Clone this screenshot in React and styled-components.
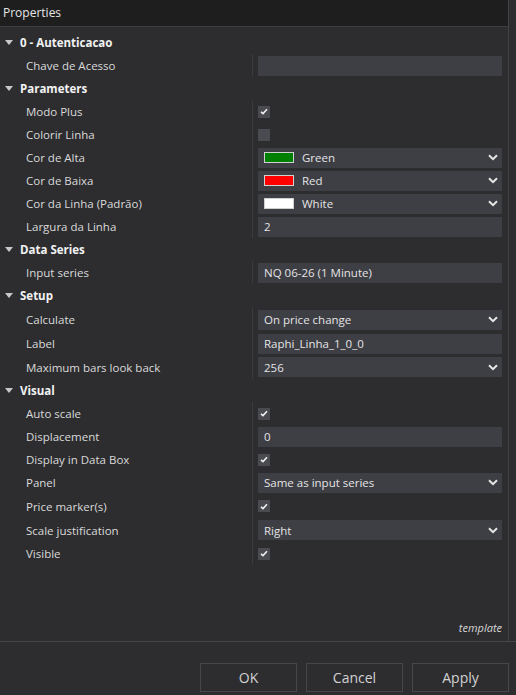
import React from "react";
import styled, { createGlobalStyle } from "styled-components";

const GlobalStyle = createGlobalStyle`
  html, body {
    margin: 0;
    padding: 0;
    background: #2d2d30;
  }
  * {
    box-sizing: border-box;
  }
`;

const Window = styled.div`
  width: 516px;
  height: 695px;
  display: flex;
  flex-direction: column;
  background: #2d2d30;
  font-family: "Open Sans", "Noto Sans", sans-serif;
  font-size: 11.5px;
  color: #dcdcdc;
  overflow: hidden;
`;

const Panel = styled.div`
  width: 509px;
  flex: 1;
  display: flex;
  flex-direction: column;
  border-right: 1px solid #434346;
`;

const TitleBar = styled.div`
  height: 27px;
  line-height: 26px;
  padding-left: 3px;
  background: #1e1e1e;
  border-bottom: 1px solid #3e3e40;
  color: #e6e6e6;
  font-size: 12px;
`;

const Grid = styled.div`
  flex: 1;
  display: flex;
  flex-direction: column;
  padding-top: 4px;
  padding-bottom: 6px;
`;

const CategoryRow = styled.div`
  height: ${(p) => p.$h}px;
  display: flex;
  align-items: center;
  padding-left: 5px;
  gap: 7px;
  color: #f2f2f2;
  font-weight: 700;
  font-size: 11.5px;
`;

const PropRow = styled.div`
  height: ${(p) => p.$h}px;
  display: grid;
  grid-template-columns: 252px 1fr;
`;

const Name = styled.div`
  display: flex;
  align-items: center;
  padding-left: 26px;
  color: #dadada;
  white-space: nowrap;
`;

const Value = styled.div`
  display: flex;
  align-items: center;
  border-left: 1px solid #3b3b3e;
  padding: 0 6px 0 5px;
`;

const TextBox = styled.div`
  flex: 1;
  height: 20px;
  display: flex;
  align-items: center;
  padding-left: 6px;
  background: #3e3e45;
  color: #e4e4e4;
  white-space: nowrap;
`;

const Select = styled(TextBox)`
  padding-right: 4px;
  gap: 8px;
`;

const SelectText = styled.span`
  flex: 1;
`;

const Swatch = styled.span`
  width: 30px;
  height: 11px;
  background: ${(p) => p.$color};
  border: 1px solid #d0d0d0;
`;

const CheckBox = styled.div`
  width: 12px;
  height: 12px;
  background: #4a4a51;
  display: flex;
  align-items: center;
  justify-content: center;
`;

const Template = styled.div`
  align-self: flex-end;
  margin-top: auto;
  padding-right: 6px;
  font-style: italic;
  font-size: 11px;
  color: #d6d6d6;
`;

const Footer = styled.div`
  height: 54px;
  border-top: 1px solid #464649;
  display: flex;
  justify-content: flex-end;
  gap: 9px;
  padding: 21px 7px 0 0;
`;

const Button = styled.button`
  width: 97px;
  height: 29px;
  background: #2d2d30;
  border: 1px solid #47474a;
  color: #d2d2d2;
  font-family: "Open Sans", "Noto Sans", sans-serif;
  font-size: 14px;
  padding: 0;
`;

const Arrow = () => (
  <svg width="8" height="5" viewBox="0 0 8 5">
    <path d="M0 0 L8 0 L4 5 Z" fill="#c8c8c8" />
  </svg>
);

const Chevron = () => (
  <svg width="10" height="7" viewBox="0 0 10 7">
    <path
      d="M1 1.2 L5 5.2 L9 1.2"
      fill="none"
      stroke="#e6e6e6"
      strokeWidth="2"
    />
  </svg>
);

const Check = () => (
  <svg width="8" height="7" viewBox="0 0 8 7">
    <path
      d="M1 3.8 L3 5.6 L7 1.2"
      fill="none"
      stroke="#f0f0f0"
      strokeWidth="1.6"
    />
  </svg>
);

const rows = [
  { cat: "0 - Autenticacao" },
  { name: "Chave de Acesso", type: "text", value: "" },
  { cat: "Parameters" },
  { name: "Modo Plus", type: "check", checked: true },
  { name: "Colorir Linha", type: "check", checked: false },
  { name: "Cor de Alta", type: "select", value: "Green", color: "#008000" },
  { name: "Cor de Baixa", type: "select", value: "Red", color: "#ff0000" },
  { name: "Cor da Linha (Padrão)", type: "select", value: "White", color: "#ffffff" },
  { name: "Largura da Linha", type: "text", value: "2" },
  { cat: "Data Series" },
  { name: "Input series", type: "text", value: "NQ 06-26 (1 Minute)" },
  { cat: "Setup" },
  { name: "Calculate", type: "select", value: "On price change", h: 25 },
  { name: "Label", type: "text", value: "Raphi_Linha_1_0_0" },
  { name: "Maximum bars look back", type: "select", value: "256", h: 24 },
  { cat: "Visual" },
  { name: "Auto scale", type: "check", checked: true },
  { name: "Displacement", type: "text", value: "0" },
  { name: "Display in Data Box", type: "check", checked: true },
  { name: "Panel", type: "select", value: "Same as input series" },
  { name: "Price marker(s)", type: "check", checked: true, h: 24 },
  { name: "Scale justification", type: "select", value: "Right", h: 24 },
  { name: "Visible", type: "check", checked: true },
];

function Editor({ row }) {
  if (row.type === "check") {
    return <CheckBox>{row.checked && <Check />}</CheckBox>;
  }
  if (row.type === "select") {
    return (
      <Select>
        {row.color && <Swatch $color={row.color} />}
        <SelectText>{row.value}</SelectText>
        <Chevron />
      </Select>
    );
  }
  return <TextBox>{row.value}</TextBox>;
}

export default function App() {
  return (
    <Window>
      <GlobalStyle />
      <Panel>
        <TitleBar>Properties</TitleBar>
        <Grid>
          {rows.map((row, i) =>
            row.cat ? (
              <CategoryRow key={i} $h={row.h || 23}>
                <Arrow />
                {row.cat}
              </CategoryRow>
            ) : (
              <PropRow key={i} $h={row.h || 23}>
                <Name>{row.name}</Name>
                <Value>
                  <Editor row={row} />
                </Value>
              </PropRow>
            )
          )}
          <Template>template</Template>
        </Grid>
      </Panel>
      <Footer>
        <Button>OK</Button>
        <Button>Cancel</Button>
        <Button>Apply</Button>
      </Footer>
    </Window>
  );
}
